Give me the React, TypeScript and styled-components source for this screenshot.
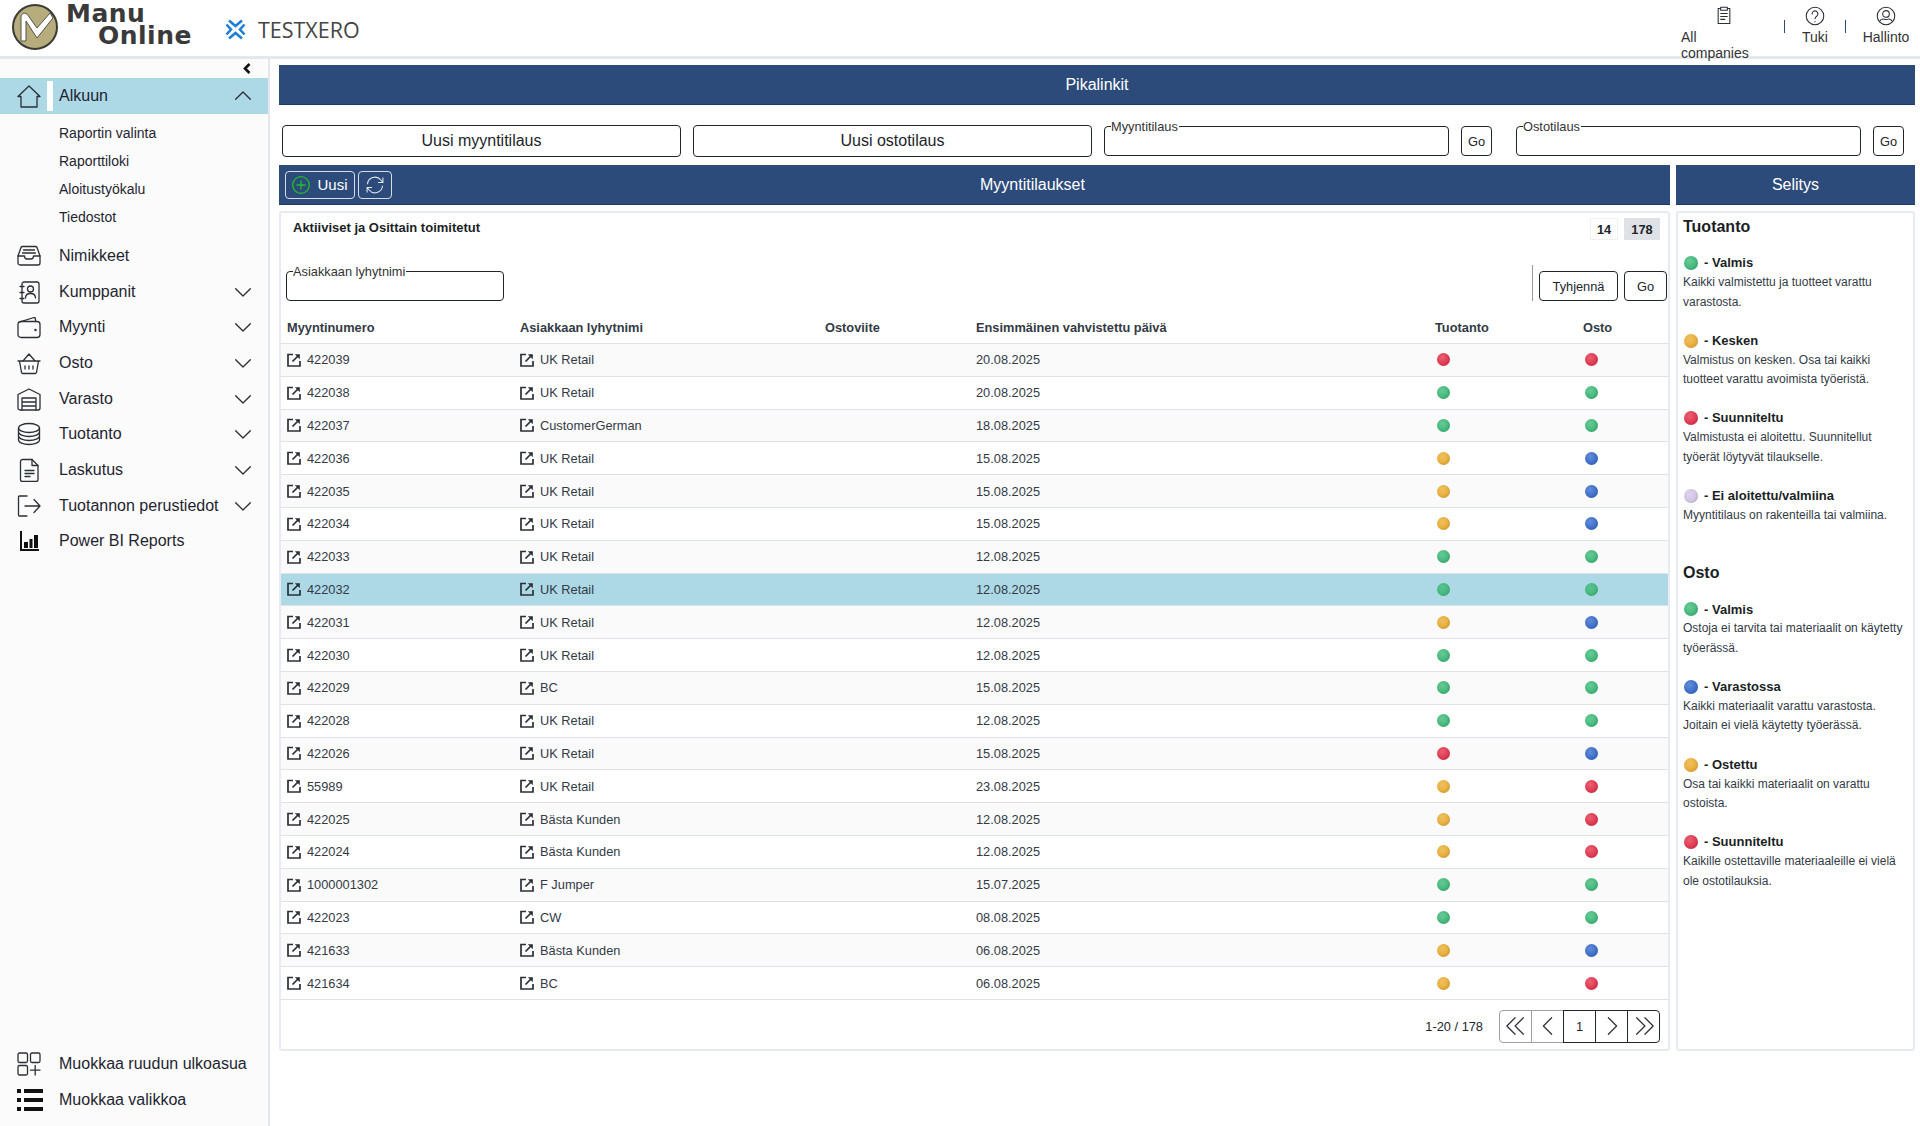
import styled, { createGlobalStyle } from 'styled-components';
import { ReactNode } from 'react';

const GlobalStyle = createGlobalStyle`
  * {
    box-sizing: border-box;
  }
  html, body {
    margin: 0;
    padding: 0;
    background: #ffffff;
    font-family: "Liberation Sans", Arial, sans-serif;
    color: #212529;
  }
`;

const Page = styled.div`
  width: 1920px;
  height: 1126px;
  display: flex;
  flex-direction: column;
  overflow: hidden;
`;

const Header = styled.header`
  height: 59px;
  flex-shrink: 0;
  display: flex;
  align-items: flex-start;
  position: relative;
  background: #ffffff;
  border-bottom: 3px solid #e2e8ee;
`;

const LogoBox = styled.div`
  display: flex;
  align-items: flex-start;
  width: 860px;
  padding: 4px 0 0 12px;
`;

const LogoWords = styled.div`
  margin-left: 8px;
  display: flex;
  flex-direction: column;
  font-family: "DejaVu Sans", sans-serif;
  font-weight: 700;
  font-size: 25px;
  line-height: 25px;
  color: #3a3a3a;
  letter-spacing: 0.5px;
`;

const LogoLine = styled.span<{ $indent?: number }>`
  display: block;
  height: 25px;
  margin-left: ${(p) => p.$indent || 0}px;
  margin-top: -3px;
`;

const Company = styled.div`
  display: flex;
  align-items: center;
  gap: 12px;
  margin-left: 33px;
  height: 50px;
  font-family: "Open Sans", sans-serif;
  font-size: 21.5px;
  color: #444444;
`;

const TopLinks = styled.div`
  margin-left: auto;
  padding-right: 11px;
  display: flex;
  align-items: flex-start;
  font-size: 14px;
  color: #333333;
`;

const TopLink = styled.div<{ $w: number }>`
  width: ${(p) => p.$w}px;
  display: flex;
  flex-direction: column;
  align-items: center;
  padding-top: 6px;
  line-height: 16px;
  gap: 3px;
`;

const TopSep = styled.span<{ $mx: number }>`
  width: 1px;
  height: 13px;
  margin: 20px ${(p) => p.$mx}px 0;
  background: #2c4b7a;
`;

const Body = styled.div`
  flex: 1;
  display: flex;
  min-height: 0;
`;

const Sidebar = styled.aside`
  width: 270px;
  flex-shrink: 0;
  display: flex;
  flex-direction: column;
  background: #fbfbfb;
  border-right: 2px solid #e2e8ee;
`;

const Collapse = styled.div`
  height: 19px;
  display: flex;
  justify-content: flex-end;
  align-items: center;
  padding-right: 17px;
`;

const NavRow = styled.div<{ $active?: boolean }>`
  height: ${(p) => (p.$active ? 36 : 35.7)}px;
  display: flex;
  align-items: center;
  font-size: 16px;
  color: #1f2530;
  background: ${(p) => (p.$active ? '#add8e6' : 'transparent')};
`;

const NavIcon = styled.span`
  width: 59px;
  height: 100%;
  flex-shrink: 0;
  display: flex;
  align-items: center;
  padding-left: 17px;
  position: relative;
`;

const ActiveMark = styled.span`
  position: absolute;
  left: 47px;
  top: 3px;
  bottom: 3px;
  width: 6px;
  background: #ffffff;
`;

const NavLabel = styled.span`
  flex: 1;
`;

const NavChevron = styled.span`
  width: 33px;
  display: flex;
`;

const SubList = styled.div`
  display: flex;
  flex-direction: column;
  padding: 5px 0 7px 59px;
  font-size: 14px;
  line-height: 28px;
  color: #1f2530;
`;

const SideFooter = styled.div`
  margin-top: auto;
  padding-bottom: 8px;
`;

const Main = styled.main`
  flex: 1;
  min-width: 0;
  padding: 6px 5px 0 9px;
  display: flex;
  flex-direction: column;
`;

const BlueBar = styled.div`
  height: 40px;
  display: flex;
  align-items: center;
  justify-content: center;
  background: #2c4b7a;
  color: #ffffff;
  font-size: 16px;
  border-bottom: 1px solid #1f3a66;
`;

const QuickRow = styled.div`
  display: flex;
  align-items: flex-start;
  height: 60px;
  padding: 20px 3px 0;
`;

const QuickButton = styled.button`
  width: 399px;
  height: 32px;
  margin-right: 12px;
  background: #ffffff;
  border: 1px solid #212529;
  border-radius: 4px;
  font: 16px "Liberation Sans", Arial, sans-serif;
  color: #212529;
`;

const Field = styled.div<{ $w: number }>`
  position: relative;
  width: ${(p) => p.$w}px;
  height: 30px;
  border: 1px solid #212529;
  border-radius: 4px;
  background: #ffffff;
`;

const FieldLabel = styled.label`
  position: absolute;
  left: 6px;
  top: -7px;
  padding-right: 1px;
  background: #ffffff;
  font-size: 12.8px;
  line-height: 13px;
  color: #333333;
`;

const SmallButton = styled.button<{ $w: number }>`
  width: ${(p) => p.$w}px;
  height: 30px;
  padding: 0;
  background: #ffffff;
  border: 1px solid #212529;
  border-radius: 4px;
  font: 12.8px "Liberation Sans", Arial, sans-serif;
  color: #212529;
`;

const GoGroup = styled.div`
  display: flex;
  gap: 12px;
  margin-top: 1px;
  &:not(:last-child) {
    margin-right: 24px;
  }
`;

const Columns = styled.div`
  display: flex;
  gap: 6px;
`;

const OrdersColumn = styled.section`
  flex: 1;
  min-width: 0;
`;

const LegendColumn = styled.section`
  width: 239px;
  flex-shrink: 0;
`;

const OrdersBar = styled(BlueBar)`
  padding: 0 0 0 6px;
`;

const BarButton = styled.button<{ $w: number }>`
  width: ${(p) => p.$w}px;
  height: 28px;
  margin-right: 3px;
  padding: 0;
  display: flex;
  align-items: center;
  justify-content: center;
  gap: 7px;
  background: transparent;
  border: 1px solid #d5dde8;
  border-radius: 4px;
  color: #ffffff;
  font: 15px "Liberation Sans", Arial, sans-serif;
`;

const BarTitle = styled.div`
  flex: 1;
  text-align: center;
`;

const Card = styled.div`
  margin-top: 6px;
  height: 840px;
  background: #ffffff;
  border: 2px solid #e6ebf1;
  border-radius: 3px;
`;

const CardTop = styled.div`
  display: flex;
  justify-content: space-between;
  padding: 5px 8px 0 12px;
  height: 52px;
`;

const CardTitle = styled.div`
  font-size: 13px;
  font-weight: 700;
  line-height: 19px;
  color: #1b1f26;
`;

const Badges = styled.div`
  display: flex;
  gap: 6px;
`;

const Badge = styled.span<{ $w: number; $on?: boolean }>`
  width: ${(p) => p.$w}px;
  height: 22px;
  display: flex;
  align-items: center;
  justify-content: center;
  font-size: 12.8px;
  font-weight: 700;
  color: #212529;
  background: ${(p) => (p.$on ? '#dee2e6' : '#ffffff')};
  border: 1px solid ${(p) => (p.$on ? '#dee2e6' : '#eef0f2')};
`;

const FilterRow = styled.div`
  display: flex;
  align-items: flex-end;
  height: 36px;
  padding: 0 1px 0 5px;
  gap: 6px;
`;

const FilterSpacer = styled.div`
  flex: 1;
`;

const FilterDivider = styled.span`
  width: 1px;
  height: 36px;
  background: #9a9a9a;
`;

const RowGrid = styled.div<{ $head?: boolean; $bg?: string }>`
  display: grid;
  grid-template-columns: 233px 305px 151px 459px 148px 1fr;
  align-items: center;
  height: ${(p) => (p.$head ? 43 : 32.8)}px;
  padding-top: ${(p) => (p.$head ? 10 : 0)}px;
  font-size: 12.8px;
  font-weight: ${(p) => (p.$head ? 700 : 400)};
  color: ${(p) => (p.$head ? '#333a45' : '#333a45')};
  background: ${(p) => p.$bg || 'transparent'};
  border-bottom: 1px solid #e0e3e6;
`;

const Cell = styled.div`
  padding-left: 6px;
  display: flex;
  align-items: center;
  gap: 6px;
  white-space: nowrap;
`;

const Dot = styled.span<{ $c: string; $size?: number }>`
  display: inline-block;
  flex-shrink: 0;
  width: ${(p) => p.$size || 13}px;
  height: ${(p) => p.$size || 13}px;
  margin-left: ${(p) => (p.$size ? 0 : 2)}px;
  border-radius: 50%;
  background: radial-gradient(circle at 40% 35%, ${(p) => p.$c}cc, ${(p) => p.$c} 55%, ${(p) => p.$c} 100%);
  box-shadow: inset -1px -1px 2px rgba(0, 0, 0, 0.12);
`;

const Pager = styled.div`
  display: flex;
  justify-content: flex-end;
  align-items: center;
  gap: 17px;
  padding: 10px 8px 0 0;
  font-size: 12.8px;
  color: #212529;
`;

const PagerGroup = styled.div`
  display: flex;
  height: 33px;
  border-radius: 4px;
`;

const PagerCell = styled.div<{ $off?: boolean }>`
  width: 33px;
  height: 33px;
  margin-left: -1px;
  display: flex;
  align-items: center;
  justify-content: center;
  background: #ffffff;
  border: 1px solid ${(p) => (p.$off ? '#a0a0a0' : '#212529')};
  color: ${(p) => (p.$off ? '#8f8f8f' : '#212529')};
  &:first-child {
    border-radius: 4px 0 0 4px;
  }
  &:last-child {
    border-radius: 0 4px 4px 0;
  }
`;

const LegendCard = styled(Card)`
  padding: 4px 5px 0 5px;
`;

const LegendHeading = styled.h3`
  margin: 0 0 16px;
  height: 20px;
  font-size: 16px;
  line-height: 20px;
  font-weight: 700;
  color: #1b1f26;
`;

const LegendItem = styled.div`
  height: 77.6px;
  font-size: 12px;
  line-height: 19.5px;
  color: #333a45;
`;

const LegendName = styled.div`
  display: flex;
  align-items: center;
  gap: 6px;
  height: 20px;
  padding-left: 1px;
  font-size: 13px;
  font-weight: 700;
  color: #1b1f26;
`;

const Stroke = styled.svg.attrs({
  fill: 'none',
  stroke: 'currentColor',
  strokeWidth: 1.3,
  strokeLinecap: 'round',
  strokeLinejoin: 'round',
})`
  display: block;
  flex-shrink: 0;
  color: #2b2f36;
`;

function Icon({ size = 24, box = 24, children }: { size?: number; box?: number; children: ReactNode }) {
  return (
    <Stroke width={size} height={size} viewBox={`0 0 ${box} ${box}`}>
      {children}
    </Stroke>
  );
}

const navIcons: Record<string, ReactNode> = {
  home: <path d="M1 12.5 12 2l11 10.500h-3V23H4V12.500Z" />,
  items: (
    <>
      <path d="M1 12 4 3.500A1.500 1.500 0 0 1 5.500 2.500h13A1.500 1.500 0 0 1 20 3.500L23 12v7a2 2 0 0 1-2 2H3a2 2 0 0 1-2-2Z" />
      <path d="M1 12h6.500c0 2 1 3 2.500 3h4c1.500 0 2.500-1 2.500-3H23" />
      <path d="M6.500 6h11M5.500 9h13" />
    </>
  ),
  partners: (
    <>
      <rect x="5" y="2" width="17" height="21" rx="2" />
      <path d="M3 6.500h4M3 12.500h4M3 18.500h4" />
      <circle cx="13.500" cy="9" r="3" />
      <path d="M8.500 18c0-3 2-4.500 5-4.500s5 1.500 5 4.500" />
    </>
  ),
  sales: (
    <>
      <rect x="1" y="6.500" width="22" height="16" rx="3" />
      <path d="M3 6.800 17 2.500a1.500 1.500 0 0 1 1.500 1.500v2.500" />
      <circle cx="18.500" cy="15" r="0.600" fill="currentColor" />
    </>
  ),
  basket: (
    <>
      <path d="M1 10h22M2.500 10l2 11.500a1.500 1.500 0 0 0 1.500 1h12a1.500 1.500 0 0 0 1.500-1l2-11.500" />
      <path d="M6 10l6-7 6 7M8 15v3M12 15v3M16 15v3" />
    </>
  ),
  warehouse: (
    <>
      <path d="M1 7.500 12 2l11 5.500V21a2 2 0 0 1-2 2H3a2 2 0 0 1-2-2Z" />
      <path d="M5 23V11h14v12M5 15h14M5 19h14" />
    </>
  ),
  database: (
    <>
      <ellipse cx="12" cy="6" rx="10.500" ry="4.500" />
      <path d="M1.500 6v12c0 2.500 4.700 4.500 10.500 4.500s10.500-2 10.500-4.500V6" />
      <path d="M1.500 10c0 2.500 4.700 4.500 10.500 4.500s10.500-2 10.500-4.500M1.500 14c0 2.500 4.700 4.500 10.500 4.500s10.500-2 10.500-4.500" />
    </>
  ),
  file: (
    <>
      <path d="M3.500 3.500a2 2 0 0 1 2-2H15l6 6v14a2 2 0 0 1-2 2H5.500a2 2 0 0 1-2-2Z" />
      <path d="M15 1.500V7.500h6M8 12.500h9M8 15.500h9M8 18.500h5" />
    </>
  ),
  exit: (
    <>
      <path d="M10 2H2.500a1 1 0 0 0-1 1v18a1 1 0 0 0 1 1H10" />
      <path d="M8 12h15M17 5.500 23 12l-6 6.500" />
    </>
  ),
  layout: (
    <>
      <rect x="1" y="1" width="9.500" height="9.500" rx="1.500" />
      <rect x="13.500" y="1" width="9.500" height="9.500" rx="1.500" />
      <rect x="1" y="13.500" width="9.500" height="9.500" rx="1.500" />
      <path d="M18.200 13.500V23M13.500 18.200H23" />
    </>
  ),
};

function PowerBiIcon() {
  return (
    <svg width="24" height="24" viewBox="0 0 24 24">
      <path d="M4 2v19h18" fill="none" stroke="#111" strokeWidth="2" />
      <rect x="7" y="13" width="4" height="6" fill="#111" />
      <rect x="12.500" y="10" width="3" height="9" fill="#111" />
      <rect x="17" y="6" width="4" height="13" fill="#111" />
    </svg>
  );
}

function ListIcon() {
  return (
    <svg width="26" height="22" viewBox="0 0 26 22">
      <rect x="0" y="0" width="4" height="4" fill="#111" />
      <rect x="7" y="0" width="19" height="4" fill="#111" />
      <rect x="0" y="9" width="4" height="4" fill="#111" />
      <rect x="7" y="9" width="19" height="4" fill="#111" />
      <rect x="0" y="18" width="4" height="4" fill="#111" />
      <rect x="7" y="18" width="19" height="4" fill="#111" />
    </svg>
  );
}

function Chevron({ up }: { up?: boolean }) {
  return (
    <Icon size={16}>
      <path d={up ? 'M1 17 12 6l11 11' : 'M1 7l11 11L23 7'} strokeWidth="2" />
    </Icon>
  );
}

function ExternalIcon() {
  return (
    <svg width="14" height="14" viewBox="0 0 14 14" fill="none" stroke="#2b2f36" strokeWidth="1.7">
      <path d="M6 1.500H1v11.500h12V8" />
      <path d="M5.500 8.500 12 2" />
      <path d="M7.800 1.200h5v5Z" fill="#2b2f36" stroke="none" />
    </svg>
  );
}

function Logo() {
  return (
    <svg width="46" height="46" viewBox="0 0 46 46">
      <circle cx="23" cy="23" r="22" fill="#b7ad7c" stroke="#3b3b36" strokeWidth="2" />
      <path d="M9 37V13c0-3 3-5 6-3l10 14L38 9l3 5-16 20L14 17v20Z" fill="#ffffff" stroke="#55534a" strokeWidth="1" />
    </svg>
  );
}

function XeroMark() {
  return (
    <svg width="21" height="21" viewBox="0 0 21 21" fill="none" stroke="#1f7fd6" strokeWidth="2.600">
      <path d="M4 1.500l6.500 5.500L17 1.500" />
      <path d="M4 19.500l6.500-5.500 6.500 5.500" />
      <path d="M1.500 5.500l4.500 5-4.500 5" />
      <path d="M19.500 5.500l-4.500 5 4.500 5" />
    </svg>
  );
}

const stateColors: Record<string, string> = {
  g: '#45bb7d',
  y: '#eab03c',
  r: '#e23a52',
  b: '#3f70cc',
  p: '#d4c6e6',
};

const navItems = [
  { label: 'Nimikkeet', icon: 'items', chevron: false },
  { label: 'Kumppanit', icon: 'partners', chevron: true },
  { label: 'Myynti', icon: 'sales', chevron: true },
  { label: 'Osto', icon: 'basket', chevron: true },
  { label: 'Varasto', icon: 'warehouse', chevron: true },
  { label: 'Tuotanto', icon: 'database', chevron: true },
  { label: 'Laskutus', icon: 'file', chevron: true },
  { label: 'Tuotannon perustiedot', icon: 'exit', chevron: true },
];

const orders = [
  ['422039', 'UK Retail', '20.08.2025', 'r', 'r'],
  ['422038', 'UK Retail', '20.08.2025', 'g', 'g'],
  ['422037', 'CustomerGerman', '18.08.2025', 'g', 'g'],
  ['422036', 'UK Retail', '15.08.2025', 'y', 'b'],
  ['422035', 'UK Retail', '15.08.2025', 'y', 'b'],
  ['422034', 'UK Retail', '15.08.2025', 'y', 'b'],
  ['422033', 'UK Retail', '12.08.2025', 'g', 'g'],
  ['422032', 'UK Retail', '12.08.2025', 'g', 'g'],
  ['422031', 'UK Retail', '12.08.2025', 'y', 'b'],
  ['422030', 'UK Retail', '12.08.2025', 'g', 'g'],
  ['422029', 'BC', '15.08.2025', 'g', 'g'],
  ['422028', 'UK Retail', '12.08.2025', 'g', 'g'],
  ['422026', 'UK Retail', '15.08.2025', 'r', 'b'],
  ['55989', 'UK Retail', '23.08.2025', 'y', 'r'],
  ['422025', 'Bästa Kunden', '12.08.2025', 'y', 'r'],
  ['422024', 'Bästa Kunden', '12.08.2025', 'y', 'r'],
  ['1000001302', 'F Jumper', '15.07.2025', 'g', 'g'],
  ['422023', 'CW', '08.08.2025', 'g', 'g'],
  ['421633', 'Bästa Kunden', '06.08.2025', 'y', 'b'],
  ['421634', 'BC', '06.08.2025', 'y', 'r'],
];

const productionLegend = [
  ['g', 'Valmis', 'Kaikki valmistettu ja tuotteet varattu varastosta.'],
  ['y', 'Kesken', 'Valmistus on kesken. Osa tai kaikki tuotteet varattu avoimista työeristä.'],
  ['r', 'Suunniteltu', 'Valmistusta ei aloitettu. Suunnitellut työerät löytyvät tilaukselle.'],
  ['p', 'Ei aloitettu/valmiina', 'Myyntitilaus on rakenteilla tai valmiina.'],
];

const purchaseLegend = [
  ['g', 'Valmis', 'Ostoja ei tarvita tai materiaalit on käytetty työerässä.'],
  ['b', 'Varastossa', 'Kaikki materiaalit varattu varastosta. Joitain ei vielä käytetty työerässä.'],
  ['y', 'Ostettu', 'Osa tai kaikki materiaalit on varattu ostoista.'],
  ['r', 'Suunniteltu', 'Kaikille ostettaville materiaaleille ei vielä ole ostotilauksia.'],
];

function rowColor(index: number) {
  if (index === 7) return '#add8e6';
  return index % 2 === 0 ? '#fafafa' : '#ffffff';
}

function Legend({ items }: { items: string[][] }) {
  return (
    <>
      {items.map(([state, name, text]) => (
        <LegendItem key={name}>
          <LegendName>
            <Dot $c={stateColors[state]} $size={14} />- {name}
          </LegendName>
          {text}
        </LegendItem>
      ))}
    </>
  );
}

export default function App() {
  return (
    <Page>
      <GlobalStyle />
      <Header>
        <LogoBox>
          <Logo />
          <LogoWords>
            <LogoLine>Manu</LogoLine>
            <LogoLine $indent={32}>Online</LogoLine>
          </LogoWords>
          <Company>
            <XeroMark />
            TESTXERO
          </Company>
        </LogoBox>
        <TopLinks>
          <TopLink $w={86}>
            <Icon size={20}>
              <path d="M7 3H5v18h14V3h-2M8 1.500h8V5H8ZM8 9h8M8 12.500h8M8 16h5" />
            </Icon>
            All companies
          </TopLink>
          <TopSep $mx={17} />
          <TopLink $w={26}>
            <Icon size={20}>
              <circle cx="12" cy="12" r="10.500" />
              <path d="M8.500 9.500a3.500 3.500 0 1 1 5.500 2.800c-1.300.9-2 1.500-2 3M12 18.500v.5" />
            </Icon>
            Tuki
          </TopLink>
          <TopSep $mx={17} />
          <TopLink $w={46}>
            <Icon size={20}>
              <circle cx="12" cy="12" r="10.500" />
              <circle cx="12" cy="9.500" r="4" />
              <path d="M4.500 18.500c1-2.500 3-3 4-3 1 1 5.500 1 7 0 1 0 3 .5 4 3" />
            </Icon>
            Hallinto
          </TopLink>
        </TopLinks>
      </Header>
      <Body>
        <Sidebar>
          <Collapse>
            <svg width="8" height="11" viewBox="0 0 8 11" fill="none" stroke="#111" strokeWidth="2.600">
              <path d="M6.500 1 2 5.500 6.500 10" />
            </svg>
          </Collapse>
          <NavRow $active>
            <NavIcon>
              <Icon>{navIcons.home}</Icon>
              <ActiveMark />
            </NavIcon>
            <NavLabel>Alkuun</NavLabel>
            <NavChevron>
              <Chevron up />
            </NavChevron>
          </NavRow>
          <SubList>
            <span>Raportin valinta</span>
            <span>Raporttiloki</span>
            <span>Aloitustyökalu</span>
            <span>Tiedostot</span>
          </SubList>
          {navItems.map((item) => (
            <NavRow key={item.label}>
              <NavIcon>
                <Icon>{navIcons[item.icon]}</Icon>
              </NavIcon>
              <NavLabel>{item.label}</NavLabel>
              {item.chevron && (
                <NavChevron>
                  <Chevron />
                </NavChevron>
              )}
            </NavRow>
          ))}
          <NavRow>
            <NavIcon>
              <PowerBiIcon />
            </NavIcon>
            <NavLabel>Power BI Reports</NavLabel>
          </NavRow>
          <SideFooter>
            <NavRow>
              <NavIcon>
                <Icon>{navIcons.layout}</Icon>
              </NavIcon>
              <NavLabel>Muokkaa ruudun ulkoasua</NavLabel>
            </NavRow>
            <NavRow>
              <NavIcon>
                <ListIcon />
              </NavIcon>
              <NavLabel>Muokkaa valikkoa</NavLabel>
            </NavRow>
          </SideFooter>
        </Sidebar>
        <Main>
          <BlueBar>Pikalinkit</BlueBar>
          <QuickRow>
            <QuickButton>Uusi myyntitilaus</QuickButton>
            <QuickButton>Uusi ostotilaus</QuickButton>
            <GoGroup>
              <Field $w={345}>
                <FieldLabel>Myyntitilaus</FieldLabel>
              </Field>
              <SmallButton $w={31}>Go</SmallButton>
            </GoGroup>
            <GoGroup>
              <Field $w={345}>
                <FieldLabel>Ostotilaus</FieldLabel>
              </Field>
              <SmallButton $w={31}>Go</SmallButton>
            </GoGroup>
          </QuickRow>
          <Columns>
            <OrdersColumn>
              <OrdersBar>
                <BarButton $w={70}>
                  <svg width="18" height="18" viewBox="0 0 18 18" fill="none" stroke="#22c02a" strokeWidth="1.300">
                    <circle cx="9" cy="9" r="8.300" />
                    <path d="M9 4.500v9M4.500 9h9" />
                  </svg>
                  Uusi
                </BarButton>
                <BarButton $w={34}>
                  <svg width="20" height="20" viewBox="0 0 24 24" fill="none" stroke="#dfe6ef" strokeWidth="1.300">
                    <path d="M3 11a9 9 0 0 1 16-5l2.500 3M21.500 3v6h-6" />
                    <path d="M21 13a9 9 0 0 1-16 5l-2.500-3M2.500 21v-6h6" />
                  </svg>
                </BarButton>
                <BarTitle>Myyntitilaukset</BarTitle>
              </OrdersBar>
              <Card>
                <CardTop>
                  <CardTitle>Aktiiviset ja Osittain toimitetut</CardTitle>
                  <Badges>
                    <Badge $w={28}>14</Badge>
                    <Badge $w={36} $on>
                      178
                    </Badge>
                  </Badges>
                </CardTop>
                <FilterRow>
                  <Field $w={218}>
                    <FieldLabel>Asiakkaan lyhytnimi</FieldLabel>
                  </Field>
                  <FilterSpacer />
                  <FilterDivider />
                  <SmallButton $w={79}>Tyhjennä</SmallButton>
                  <SmallButton $w={43}>Go</SmallButton>
                </FilterRow>
                <RowGrid $head>
                  <Cell>Myyntinumero</Cell>
                  <Cell>Asiakkaan lyhytnimi</Cell>
                  <Cell>Ostoviite</Cell>
                  <Cell>Ensimmäinen vahvistettu päivä</Cell>
                  <Cell>Tuotanto</Cell>
                  <Cell>Osto</Cell>
                </RowGrid>
                {orders.map(([number, customer, date, production, purchase], index) => (
                  <RowGrid key={number} $bg={rowColor(index)}>
                    <Cell>
                      <ExternalIcon />
                      {number}
                    </Cell>
                    <Cell>
                      <ExternalIcon />
                      {customer}
                    </Cell>
                    <Cell />
                    <Cell>{date}</Cell>
                    <Cell>
                      <Dot $c={stateColors[production]} />
                    </Cell>
                    <Cell>
                      <Dot $c={stateColors[purchase]} />
                    </Cell>
                  </RowGrid>
                ))}
                <Pager>
                  <span>1-20 / 178</span>
                  <PagerGroup>
                    <PagerCell $off>
                      <Icon size={22}>
                        <path d="M11 3 2 12l9 9M20 3l-9 9 9 9" />
                      </Icon>
                    </PagerCell>
                    <PagerCell $off>
                      <Icon size={22}>
                        <path d="M16 3 7 12l9 9" />
                      </Icon>
                    </PagerCell>
                    <PagerCell>1</PagerCell>
                    <PagerCell>
                      <Icon size={22}>
                        <path d="M8 3l9 9-9 9" />
                      </Icon>
                    </PagerCell>
                    <PagerCell>
                      <Icon size={22}>
                        <path d="M4 3l9 9-9 9M13 3l9 9-9 9" />
                      </Icon>
                    </PagerCell>
                  </PagerGroup>
                </Pager>
              </Card>
            </OrdersColumn>
            <LegendColumn>
              <BlueBar>Selitys</BlueBar>
              <LegendCard>
                <LegendHeading>Tuotanto</LegendHeading>
                <Legend items={productionLegend} />
                <LegendHeading>Osto</LegendHeading>
                <Legend items={purchaseLegend} />
              </LegendCard>
            </LegendColumn>
          </Columns>
        </Main>
      </Body>
    </Page>
  );
}
